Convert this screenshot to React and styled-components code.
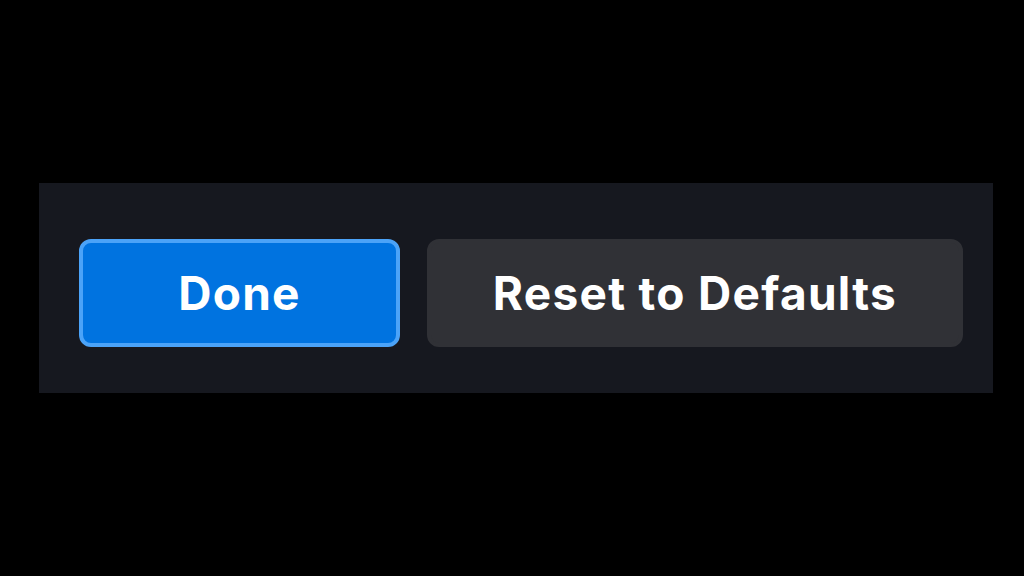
import React from "react";
import styled, { createGlobalStyle } from "styled-components";

const Global = createGlobalStyle`
  html, body { margin: 0; padding: 0; background: #000; }
  body { font-family: Inter, "Noto Sans", sans-serif; }
`;

const Page = styled.div`
  width: 1024px;
  height: 576px;
  background: #000;
  padding: 183px 0 0 39px;
  box-sizing: border-box;
`;

const Panel = styled.div`
  width: 954px;
  height: 210px;
  box-sizing: border-box;
  background: #16181f;
  padding: 56px 30px 46px 40px;
  display: flex;
  gap: 27px;
`;

const Button = styled.button`
  flex: ${(p) => (p.$wide ? "0 0 536px" : "0 0 321px")};
  height: 108px;
  box-sizing: border-box;
  border-radius: 12px;
  border: 4px solid ${(p) => (p.$primary ? "#4ba3f8" : "#303136")};
  background: ${(p) => (p.$primary ? "#0073e0" : "#303136")};
  color: #fff;
  font-family: Inter, "Noto Sans", sans-serif;
  font-weight: 700;
  font-size: 46px;
  letter-spacing: 1.3px;
  display: flex;
  align-items: center;
  justify-content: center;
  padding: 0;
  cursor: pointer;
`;

export default function App() {
  return (
    <>
      <Global />
      <Page>
        <Panel>
          <Button $primary>Done</Button>
          <Button $wide>Reset to Defaults</Button>
        </Panel>
      </Page>
    </>
  );
}
